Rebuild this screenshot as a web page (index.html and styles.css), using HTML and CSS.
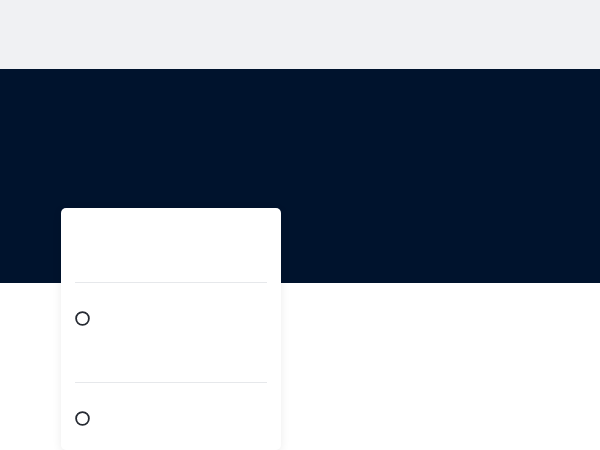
FILE: index.html
```html
<!DOCTYPE html>
<html>
<head>
<meta charset="utf-8">
<link rel="stylesheet" href="styles.css">
</head>
<body>
<header class="topbar"></header>
<section class="hero"></section>
<main class="content">
  <div class="card">
    <div class="card-head"></div>
    <div class="option"><svg class="radio" viewBox="0 0 15 15"><circle cx="7.5" cy="7.5" r="6.4" fill="none" stroke="#262b33" stroke-width="1.8"/></svg></div>
    <div class="option"><svg class="radio" viewBox="0 0 15 15"><circle cx="7.5" cy="7.5" r="6.4" fill="none" stroke="#262b33" stroke-width="1.8"/></svg></div>
  </div>
</main>
</body>
</html>
```

FILE: styles.css
```css
html, body {
  margin: 0;
  padding: 0;
  background: #ffffff;
  font-family: "Inter", "Liberation Sans", sans-serif;
  overflow: hidden;
  height: 450px;
}
.topbar {
  height: 69px;
  background: #f0f1f3;
}
.hero {
  height: 214px;
  background: #00132d;
}
.content {
  margin-top: -75px;
  padding-left: 61px;
}
.card {
  width: 220px;
  height: 242px;
  overflow: hidden;
  background: #ffffff;
  border-radius: 5px;
  box-shadow: 0 2px 10px rgba(0, 0, 0, 0.08);
  padding: 0 14px;
  box-sizing: border-box;
}
.card-head {
  height: 74px;
  border-bottom: 1px solid #e6e8eb;
}
.option {
  height: 100px;
  border-bottom: 1px solid #e6e8eb;
  padding-top: 28px;
  box-sizing: border-box;
}
.radio {
  display: block;
  width: 15px;
  height: 15px;
}
```
